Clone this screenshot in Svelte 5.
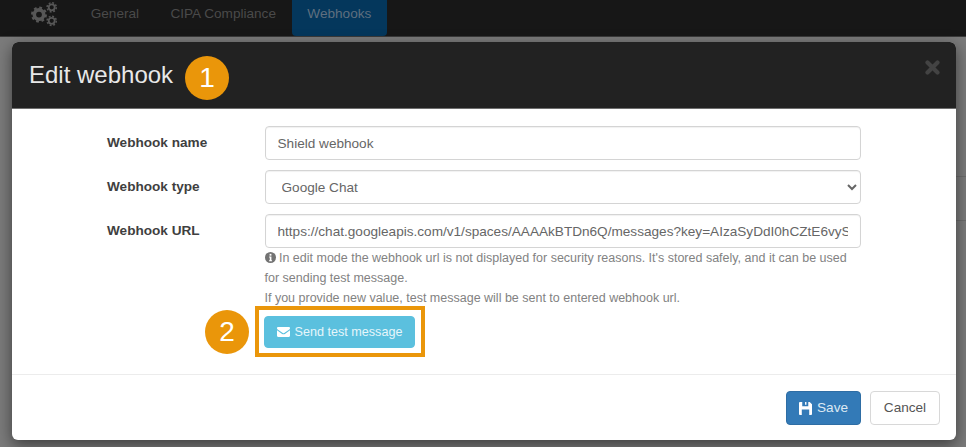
<script>
  let name = 'Shield webhook';
  let url = 'https://chat.googleapis.com/v1/spaces/AAAAkBTDn6Q/messages?key=AIzaSyDdI0hCZtE6vySHELqKhM3Rt';
</script>

<div class="page">
  <div class="under"></div>
  <nav class="nav">
    <svg class="gears" width="26" height="25" viewBox="0 0 26 25" fill="none" stroke="#575757" aria-hidden="true">
      <circle cx="8" cy="12.600" r="4.700" stroke-width="3.600"/>
      <circle cx="8" cy="12.600" r="7" stroke-width="2" stroke-dasharray="2.800 2.700"/>
      <circle cx="20.700" cy="5.300" r="3" stroke-width="1.800"/>
      <circle cx="20.700" cy="5.300" r="4.600" stroke-width="1.500" stroke-dasharray="1.900 1.700"/>
      <circle cx="20.700" cy="18.800" r="3" stroke-width="1.800"/>
      <circle cx="20.700" cy="18.800" r="4.600" stroke-width="1.500" stroke-dasharray="1.900 1.700"/>
    </svg>
    <a class="tab" href="#g">General</a>
    <a class="tab" href="#c">CIPA Compliance</a>
    <a class="tab active" href="#w">Webhooks</a>
  </nav>

  <div class="modal">
    <header class="head">
      <h4>Edit webhook</h4>
      <svg class="close" width="15" height="15" viewBox="0 0 15 15" aria-hidden="true">
        <path d="M2.500 2.500l10 10M12.500 2.500l-10 10" stroke="#434343" stroke-width="4.200" stroke-linecap="round"/>
      </svg>
    </header>

    <div class="body">
      <div class="row">
        <label for="n">Webhook name</label>
        <input id="n" class="ctl" bind:value={name} />
      </div>
      <div class="row">
        <label for="t">Webhook type</label>
        <select id="t" class="ctl sel"><option>Google Chat</option></select>
      </div>
      <div class="row url">
        <label for="u">Webhook URL</label>
        <input id="u" class="ctl" bind:value={url} />
      </div>
      <div class="help">
        <svg class="info" width="11" height="11" viewBox="0 0 12 12" aria-hidden="true">
          <circle cx="6" cy="6" r="6" fill="#737373"/>
          <rect x="5" y="2" width="2" height="2" fill="#fff"/>
          <path d="M4.500 5h2.500v4h.7v1H4.400V9h.8V6h-.7z" fill="#fff"/>
        </svg>
        In edit mode the webhook url is not displayed for security reasons. It's stored safely, and it can be used
        for sending test message.<br />
        If you provide new value, test message will be sent to entered webhook url.
      </div>
      <div class="test">
        <button class="btn info-btn">
          <svg width="13" height="10" viewBox="0 0 13 10" fill="#fff" aria-hidden="true">
            <path d="M0 1.200C0 .5.500 0 1.200 0h10.600c.7 0 1.200.5 1.200 1.200 0 .5-.3.9-.7 1.200L7.200 6c-.4.3-1 .3-1.400 0L.7 2.400C.3 2.100 0 1.700 0 1.200z"/>
            <path d="M0 3.300V8.800C0 9.500.5 10 1.200 10h10.600c.7 0 1.200-.5 1.200-1.200V3.300L7.900 6.900c-.9.6-1.900.6-2.800 0z"/>
          </svg>
          Send test message
        </button>
      </div>
    </div>

    <footer class="foot">
      <button class="btn primary">
        <svg width="13" height="13" viewBox="0 0 14 14" fill="#fff" aria-hidden="true">
          <path fill-rule="evenodd" d="M1 0h10.500L14 2.500V13a1 1 0 0 1-1 1H1a1 1 0 0 1-1-1V1a1 1 0 0 1 1-1zm2.500 0v4.500h6.500V0H8v3H6.500V0zM3 8v6h8V8z"/>
        </svg>
        Save
      </button>
      <button class="btn default">Cancel</button>
    </footer>
  </div>

  <span class="badge one">1</span>
  <span class="badge two">2</span>
  <span class="frame"></span>
</div>

<style>
  :global(body) {
    margin: 0;
  }
  .page {
    position: relative;
    width: 966px;
    height: 447px;
    overflow: hidden;
    background: #7b7b7b;
    font-family: "Liberation Sans", Arial, sans-serif;
    font-size: 13.600px;
    line-height: 20px;
    color: #333;
  }
  .under {
    position: absolute;
    left: 956px;
    right: 0;
    top: 176px;
    height: 43px;
    border-top: 1px solid #6c6c6c;
    border-bottom: 1px solid #6c6c6c;
  }
  .nav {
    position: relative;
    display: flex;
    align-items: stretch;
    height: 36px;
    padding-left: 31px;
    background: #171717;
    border-bottom: 1px solid #3a3a3a;
  }
  .gears {
    margin: 2px 18px 0 0;
    align-self: flex-start;
  }
  .tab {
    padding: 4px 15.700px 0;
    line-height: 20px;
    color: #4a4a4a;
    text-decoration: none;
  }
  .tab.active {
    color: #5f6f7f;
    background: #04375c;
    border-radius: 0 0 4px 4px;
  }
  .modal {
    position: relative;
    margin: 5px 10px 0 12px;
    height: 398px;
    background: #fff;
    border-radius: 6px;
    box-shadow: 0 5px 15px rgba(0, 0, 0, 0.5);
    display: flex;
    flex-direction: column;
    overflow: hidden;
  }
  .head {
    display: flex;
    justify-content: space-between;
    box-sizing: border-box;
    height: 67px;
    padding: 0 16px 0 17px;
    background: #222;
    border-bottom: 1px solid #6e6e6e;
    flex: none;
  }
  h4 {
    margin: 0;
    font-size: 24px;
    font-weight: 400;
    line-height: 26px;
    padding-top: 20px;
    color: #e8e8e8;
  }
  .close {
    margin-top: 18px;
  }
  .body {
    flex: 1;
    padding: 17px 95px 0 95px;
  }
  .row {
    display: grid;
    grid-template-columns: 157.500px 596.500px;
    align-items: center;
    margin-bottom: 10px;
  }
  .row.url {
    margin-bottom: 0;
  }
  label {
    font-weight: 700;
    color: #3f3f3f;
  }
  .ctl {
    box-sizing: border-box;
    width: 596.500px;
    height: 34px;
    padding: 6px 12px;
    border: 1px solid #d4d4d4;
    border-radius: 4px;
    background: #fff;
    color: #666;
    font: inherit;
    outline: none;
    box-shadow: inset 0 1px 1px rgba(0, 0, 0, 0.06);
  }
  .help {
    margin: 0 0 0 157.500px;
    width: 600px;
    font-size: 12.500px;
    line-height: 20px;
    color: #828282;
  }
  .info {
    vertical-align: -1px;
  }
  .test {
    margin: 8px 0 0 157px;
  }
  .btn {
    display: inline-flex;
    align-items: center;
    justify-content: center;
    gap: 5px;
    box-sizing: border-box;
    height: 34px;
    padding: 0;
    border: 1px solid transparent;
    border-radius: 4px;
    font: inherit;
    white-space: nowrap;
  }
  .info-btn {
    width: 151px;
    height: 32px;
    font-size: 12.600px;
    background: #5bc0de;
    border-color: #5bc0de;
    color: #e6f6fb;
  }
  .foot {
    flex: none;
    display: flex;
    justify-content: flex-end;
    gap: 9px;
    height: 66px;
    padding: 16px 16px 0 0;
    box-sizing: border-box;
    border-top: 1px solid #ececec;
  }
  .primary {
    width: 75px;
    background: #337ab7;
    border-color: #2e6da4;
    color: #dce9f3;
  }
  .default {
    width: 70px;
    background: #fff;
    border-color: #d8d8d8;
    color: #555;
  }
  .badge {
    position: absolute;
    width: 44px;
    height: 44px;
    border-radius: 50%;
    background: #ea960a;
    color: #fff;
    font-size: 28px;
    line-height: 44px;
    text-align: center;
  }
  .one {
    left: 185px;
    top: 56px;
  }
  .two {
    left: 205px;
    top: 310px;
  }
  .frame {
    position: absolute;
    left: 255px;
    top: 306px;
    width: 170px;
    height: 51px;
    box-sizing: border-box;
    border: 4px solid #ea960a;
  }
</style>
